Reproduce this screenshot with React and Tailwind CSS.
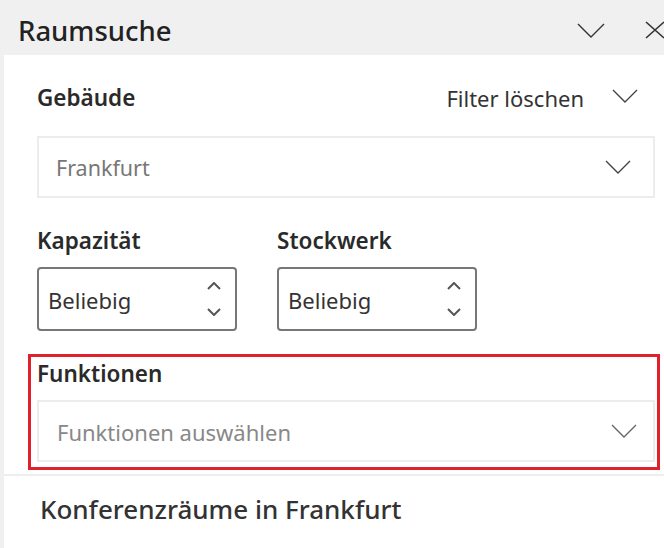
import React from "react";

const font = { fontFamily: '"Noto Sans", "Open Sans", Arial, sans-serif' };

function Chevron({ className = "", w = 26, h = 14, color = "#333" }) {
  return (
    <svg width={w} height={h} viewBox={`0 0 ${w} ${h}`} className={className} fill="none">
      <polyline points={`1,1 ${w / 2},${h - 1} ${w - 1},1`} stroke={color} strokeWidth="1.4" />
    </svg>
  );
}

function Spin({ label }) {
  return (
    <div className="flex flex-col">
      <div className="text-[22.5px] font-semibold text-[#2a2a2a] leading-[26px] h-[26px]">{label}</div>
      <div className="mt-[13px] w-[200px] h-[64px] border-2 border-[#777] rounded-[4px] flex items-center justify-between pl-[9px] pr-[14px]">
        <span className="text-[22px] text-[#333] leading-none pt-[2px]">Beliebig</span>
        <div className="flex flex-col gap-[18px]">
          <svg width="14" height="8" viewBox="0 0 14 8" fill="none">
            <polyline points="1,7 7,1 13,7" stroke="#555" strokeWidth="2" />
          </svg>
          <svg width="14" height="8" viewBox="0 0 14 8" fill="none">
            <polyline points="1,1 7,7 13,1" stroke="#555" strokeWidth="2" />
          </svg>
        </div>
      </div>
    </div>
  );
}

export default function App() {
  return (
    <div className="w-[664px] h-[548px] bg-[#f0f0f0] overflow-hidden" style={font}>
      <div className="h-[55px] flex items-center justify-between pl-[18px] pt-[6px]">
        <h1 className="text-[27.5px] font-medium text-[#222] leading-none">Raumsuche</h1>
        <div className="flex items-center gap-[40px] mr-[-1px] mt-[-1px]">
          <Chevron w={28} h={15} color="#333" />
          <svg width="20" height="18" viewBox="0 0 20 18" fill="none">
            <path d="M1,1 L19,17 M19,1 L1,17" stroke="#333" strokeWidth="1.6" />
          </svg>
        </div>
      </div>
      <div className="ml-[4px] bg-white h-[493px] flex flex-col">
        <div className="pl-[33px] pr-[26px]">
          <div className="flex items-center justify-between h-[30px] mt-[28px]">
            <span className="text-[22.5px] font-semibold text-[#2a2a2a]">Gebäude</span>
            <div className="flex items-center gap-[28px]">
              <span className="text-[22px] text-[#333]">Filter löschen</span>
              <Chevron w={26} h={14} color="#444" className="mt-[-5px]" />
            </div>
          </div>
          <div className="mt-[23px] w-[618px] h-[62px] border-2 border-[#ececec] flex items-center justify-between pl-[17px] pr-[22px]">
            <span className="text-[21.5px] text-[#777] pt-[2px]">Frankfurt</span>
            <Chevron w={26} h={14} color="#444" />
          </div>
          <div className="flex gap-[40px] mt-[30px]">
            <Spin label="Kapazität" />
            <Spin label="Stockwerk" />
          </div>
        </div>
        <div className="ml-[24px] mr-[4px] mt-[23px] border-[3px] border-[#e0202a] h-[116px] pl-[6px] pr-[2px] pt-[4px]">
          <div className="text-[22.5px] font-semibold text-[#2a2a2a] leading-[26px]">Funktionen</div>
          <div className="mt-[13px] h-[62px] border-2 border-[#ececec] flex items-center justify-between pl-[18px] pr-[16px]">
            <span className="text-[22px] text-[#888] pt-[2px]">Funktionen auswählen</span>
            <Chevron w={26} h={14} color="#666" />
          </div>
        </div>
        <div className="mt-[4px] border-t-2 border-[#eeeeee]">
          <div className="pl-[36px] pt-[14px] text-[26px] font-medium text-[#333]">Konferenzräume in Frankfurt</div>
        </div>
      </div>
    </div>
  );
}
